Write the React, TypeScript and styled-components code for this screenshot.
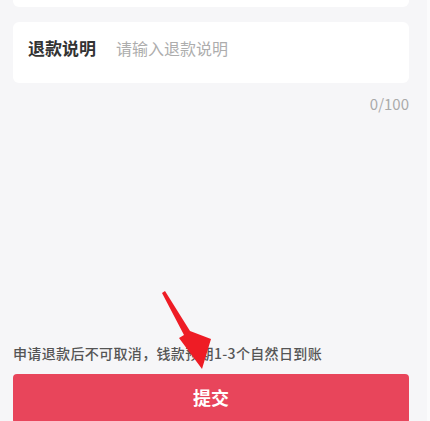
import React from "react";
import styled, { createGlobalStyle } from "styled-components";

const GlobalStyle = createGlobalStyle`
  html, body {
    margin: 0;
    padding: 0;
    overflow: hidden;
    background: #f6f6f8;
  }
  body {
    font-family: "Noto Sans CJK SC", "Noto Sans", sans-serif;
  }
`;

const Page = styled.div`
  position: relative;
  box-sizing: border-box;
  width: 430px;
  height: 424px;
  display: flex;
  flex-direction: column;
  padding: 0 18px 0 13px;
  background: #f6f6f8;
  border-right: 3px solid #fbfbfc;
`;

const TopCardEdge = styled.div`
  height: 7px;
  background: #fff;
  border-radius: 0 0 6px 6px;
`;

const Card = styled.div`
  margin-top: 15px;
  height: 61px;
  display: flex;
  align-items: center;
  padding-left: 15px;
  background: #fff;
  border-radius: 6px;
`;

const Label = styled.span`
  font-size: 17px;
  line-height: 20px;
  font-weight: 700;
  color: #333;
  margin-top: -10px;
`;

const Input = styled.input`
  flex: 1;
  margin-left: 20px;
  margin-top: -10px;
  border: none;
  outline: none;
  background: transparent;
  font-family: inherit;
  font-size: 16px;
  line-height: 20px;
  color: #333;
  padding: 0;
  &::placeholder {
    color: #adadad;
    opacity: 1;
  }
`;

const Counter = styled.div`
  margin-top: 11px;
  text-align: right;
  font-size: 15px;
  line-height: 20px;
  color: #aaa;
`;

const Spacer = styled.div`
  flex: 1;
`;

const Note = styled.div`
  font-size: 14px;
  line-height: 20px;
  font-weight: 500;
  letter-spacing: 0.35px;
  color: #555;
`;

const SubmitButton = styled.button`
  margin-top: 11px;
  height: 50px;
  padding: 0 0 4px;
  border: none;
  border-radius: 4px;
  background: #e8455b;
  color: #fff;
  font-family: inherit;
  font-size: 18px;
  font-weight: 700;
`;

const Arrow = styled.svg`
  position: absolute;
  left: 0;
  top: 0;
  pointer-events: none;
`;

export default function App() {
  return (
    <>
      <GlobalStyle />
      <Page>
        <TopCardEdge />
        <Card>
          <Label>退款说明</Label>
          <Input placeholder="请输入退款说明" />
        </Card>
        <Counter>0/100</Counter>
        <Spacer />
        <Note>申请退款后不可取消，钱款预期1-3个自然日到账</Note>
        <SubmitButton>提交</SubmitButton>
        <Arrow width="430" height="421" viewBox="0 0 430 421">
          <polygon
            points="162,293 165,291 190,331 211,339 202,369 179,338 184,335"
            fill="#ee1c25"
          />
        </Arrow>
      </Page>
    </>
  );
}
